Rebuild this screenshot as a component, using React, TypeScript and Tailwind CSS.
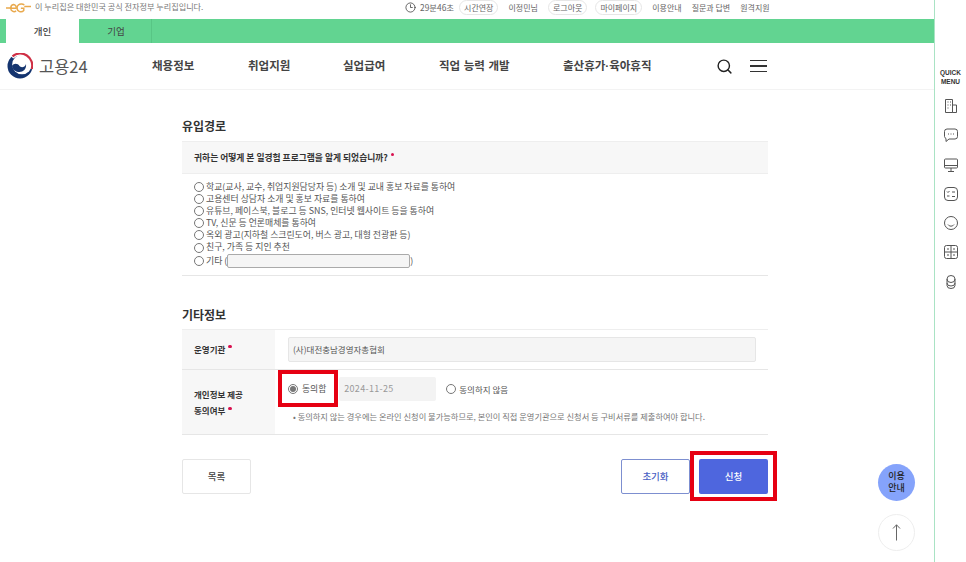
import React from 'react';
import { Clock3, Search } from 'lucide-react';

const KR = 'font-["Noto_Sans_CJK_KR","Noto_Sans",sans-serif]';

const surveyOptions = [
  '학교(교사, 교수, 취업지원담당자 등) 소개 및 교내 홍보 자료를 통하여',
  '고용센터 상담자 소개 및 홍보 자료를 통하여',
  '유튜브, 페이스북, 블로그 등 SNS, 인터넷 웹사이트 등을 통하여',
  'TV, 신문 등 언론매체를 통하여',
  '옥외 광고(지하철 스크린도어, 버스 광고, 대형 전광판 등)',
  '친구, 가족 등 지인 추천',
];

const menus = [
  { label: '채용정보', cls: 'w-[96px]' },
  { label: '취업지원', cls: 'w-[95px]' },
  { label: '실업급여', cls: 'w-[96px]' },
  { label: '직업 능력 개발', cls: 'w-[124px] [word-spacing:1px]' },
];

function Radio({ checked = false }: { checked?: boolean }) {
  return (
    <span className="flex h-[10px] w-[10px] shrink-0 items-center justify-center rounded-full border border-[#777] bg-white">
      {checked && <span className="h-[6px] w-[6px] rounded-full bg-[#777]" />}
    </span>
  );
}

function Pill({ children }: { children: React.ReactNode }) {
  return (
    <span className="flex h-[15px] items-center rounded-full border border-[#e6e6e6] px-[4px]">{children}</span>
  );
}

function Required() {
  return <span className="mb-[6px] ml-[3px] inline-block h-[3.500px] w-[3.500px] rounded-full bg-[#d8114f] align-middle" />;
}

function Logo() {
  return (
    <svg width="26" height="26" viewBox="0 0 26 26">
      <circle cx="13" cy="13" r="12.500" fill="#14346f" />
      <circle cx="15" cy="11.500" r="9.800" fill="#fff" />
      <path d="M5 13C7 9.500 11 10.500 12.500 13C14 15 18 14.500 19 11C19.800 16 16 19 12.500 19C9 19 6 17 5 13Z" fill="#14346f" />
      <path d="M4.800 4A12 12 0 0 1 24.700 16" fill="none" stroke="#fff" strokeWidth="4" />
      <path d="M5.500 3.300A12 12 0 0 1 24.700 16" fill="none" stroke="#cf2f45" strokeWidth="2.200" />
    </svg>
  );
}

function EgLogo() {
  return (
    <svg width="25" height="10" viewBox="0 0 26 10" fill="none" stroke="#e9a94d" strokeWidth="1.500">
      <path d="M0 5h6M19 3.500h7" />
      <path d="M4 5.200h6.500A3 3 0 0 0 7.800 1.400 3.500 3.500 0 0 0 5 5a3.400 3.400 0 0 0 5.500 3" />
      <path d="M19 2a4 4 0 0 0-3-1.200A4.200 4.200 0 0 0 11.500 5a4 4 0 0 0 7 2.600V5.200h-3" />
    </svg>
  );
}

function QuickIcon({ children }: { children: React.ReactNode }) {
  return (
    <svg width="14" height="16" viewBox="0 0 14 16" fill="none" stroke="#555" strokeWidth="1" className="overflow-visible">
      {children}
    </svg>
  );
}

function QuickMenu() {
  return (
    <aside className="flex w-[32px] shrink-0 flex-col items-center border-l-[1.500px] border-[#a9e3c4] bg-white pt-[68px]">
      <div className='text-center font-["Liberation_Sans",sans-serif] text-[6.500px] font-bold leading-[9px] text-[#333]'>
        QUICK
        <br />
        MENU
      </div>
      <div className="mt-[12px] flex flex-col items-center gap-[13.300px]">
        <QuickIcon>
          <path d="M1.500 1.500h7v13h-7zM8.500 7h4v7.500h-4zM3.500 4h1M6 4h1M3.500 7h1M6 7h1M3.500 10h1" />
        </QuickIcon>
        <QuickIcon>
          <path d="M3 2h8a2.500 2.500 0 0 1 2.500 2.500v5A2.500 2.500 0 0 1 11 12H5l-3 2.500V11.500A2.500 2.500 0 0 1 .5 9.500v-5A2.500 2.500 0 0 1 3 2Z" />
          <path d="M4 7h1M6.500 7h1M9 7h1" />
        </QuickIcon>
        <QuickIcon>
          <path d="M1.500 2h11a1 1 0 0 1 1 1v7a1 1 0 0 1-1 1h-11a1 1 0 0 1-1-1V3a1 1 0 0 1 1-1ZM.5 8.500h13M7 11v3M4 14.500h6" />
        </QuickIcon>
        <QuickIcon>
          <path d="M4 1.500h6a3.500 3.500 0 0 1 3.500 3.500v6a3.500 3.500 0 0 1-3.500 3.500H4A3.500 3.500 0 0 1 .5 11V5A3.500 3.500 0 0 1 4 1.500Z" />
          <path d="M3 5.500l1 1 1.500-1.500M8 6h3M3 10h2.500M8 10.500h3" />
        </QuickIcon>
        <QuickIcon>
          <circle cx="7" cy="8" r="6.500" />
          <path d="M4 9.500a3.500 3.500 0 0 0 6 0" />
        </QuickIcon>
        <QuickIcon>
          <rect x=".5" y="1.500" width="13" height="13" rx="2" />
          <path d="M7 1.500v13M.5 8h13M3 5h2M9 5h2M3 11h2M9 11h2" />
        </QuickIcon>
        <QuickIcon>
          <ellipse cx="7" cy="5" rx="4" ry="3.500" />
          <path d="M3 5v6.500a4 3 0 0 0 8 0V5M3 9a4 3 0 0 0 8 0" />
        </QuickIcon>
      </div>
    </aside>
  );
}

export default function App() {
  return (
    <div className={`${KR} relative flex h-[562px] w-[966px] overflow-hidden bg-white text-[#333]`}>
      <div className="flex w-[934px] shrink-0 flex-col">
        {/* util bar */}
        <div className="flex h-[19px] items-center pb-[4px] text-[8px] text-[#666]">
          <div className="ml-[6px]">
            <EgLogo />
          </div>
          <span className="ml-[4px] w-[370px] text-[8.150px] text-[#777]">이 누리집은 대한민국 공식 전자정부 누리집입니다.</span>
          <div className="flex items-center">
            <Clock3 size={11} strokeWidth={1.600} className="text-[#333]" />
            <span className="ml-[4px] text-[8.400px]">29분46초</span>
            <span className="ml-[5px]">
              <Pill>시간연장</Pill>
            </span>
            <span className="ml-[10px]">이정민님</span>
            <span className="ml-[10px]">
              <Pill>로그아웃</Pill>
            </span>
            <span className="ml-[8px]">
              <Pill>마이페이지</Pill>
            </span>
            <span className="ml-[10px]">이용안내</span>
            <span className="ml-[10px]">질문과 답변</span>
            <span className="ml-[10px]">원격지원</span>
          </div>
        </div>

        {/* tabs */}
        <div className="flex h-[24px] bg-[#62d491] pl-[6px] text-[9.500px] leading-[24px] text-[#444]">
          <div className="w-[73px] bg-white text-center font-medium">개인</div>
          <div className="w-[73px] border-r border-[#58c585] pl-[2px] text-center">기업</div>
        </div>

        {/* header */}
        <header className="flex h-[47px] items-center border-b border-[#f3f3f3]">
          <div className="ml-[7px] flex w-[145px] items-center">
            <Logo />
            <span className="ml-[6px] text-[16.500px] leading-none text-[#555]">고용24</span>
          </div>
          {menus.map((m) => (
            <span key={m.label} className={`${m.cls} shrink-0 text-[11.500px] font-semibold text-[#444]`}>
              {m.label}
            </span>
          ))}
          <span className="w-[120px] shrink-0 text-[11.500px] font-semibold text-[#444]">
            출산휴가<span className='font-["Liberation_Sans",sans-serif]'>·</span>육아휴직
          </span>
          <Search size={17} strokeWidth={2} className="ml-[33px] text-[#222]" />
          <div className="ml-[17px] flex w-[17px] flex-col gap-[4px]">
            <span className="h-[1.500px] bg-[#333]" />
            <span className="h-[1.500px] bg-[#333]" />
            <span className="h-[1.500px] bg-[#333]" />
          </div>
        </header>

        {/* form */}
        <main className="ml-[182px] w-[586px]">
          <h2 className="mt-[27px] text-[12px] font-semibold leading-[18px] text-[#333]">유입경로</h2>
          <div className="mt-[6px] flex h-[33px] items-center border-y border-[#eee] bg-[#f7f7f7] pl-[12px] text-[8.770px] font-semibold text-[#333]">
            귀하는 어떻게 본 일경험 프로그램을 알게 되었습니까?
            <Required />
          </div>
          <div className="h-[102px] border-b border-[#e6e6e6] pl-[12px] pt-[7px] text-[8.900px] leading-[12.100px] text-[#555]">
            {surveyOptions.map((o) => (
              <div key={o} className="flex items-center gap-[2px]">
                <Radio />
                <span>{o}</span>
              </div>
            ))}
            <div className="flex items-center">
              <Radio />
              <span className="ml-[2px]">기타 (</span>
              <span className="h-[14px] w-[183px] rounded-[2px] border border-[#aaa] bg-[#f5f5f5]" />
              <span>)</span>
            </div>
          </div>

          <h2 className="mt-[30px] text-[12px] font-semibold leading-[18px] text-[#333]">기타정보</h2>
          <div className="mt-[5px] border-b border-t border-b-[#e6e6e6] border-t-[#eee] text-[8.500px]">
            <div className="flex h-[40px] border-b border-[#e6e6e6]">
              <div className="flex w-[93px] items-center bg-[#f7f7f7] pl-[12px] font-semibold">
                운영기관
                <Required />
              </div>
              <div className="ml-[13px] mt-[7px] flex h-[25px] w-[468px] items-center rounded-[2px] border border-[#e6e6e6] bg-[#f5f5f5] pl-[4px] text-[#555]">
                (사)대전충남경영자총협회
              </div>
            </div>
            <div className="flex h-[64px]">
              <div className="flex w-[93px] flex-col justify-center bg-[#f7f7f7] pl-[12px] font-semibold leading-[16px]">
                <span>개인정보 제공</span>
                <span>
                  동의여부
                  <Required />
                </span>
              </div>
              <div className="ml-[13px] pt-[7px]">
                <div className="flex items-center text-[#555]">
                  <Radio checked />
                  <span className="ml-[4px] text-[8.800px]">동의함</span>
                  <div className="ml-[13px] flex h-[24px] w-[97px] items-center rounded-[2px] bg-[#f3f3f3] pl-[5px] text-[9px] tracking-[0.3px] text-[#999]">
                    2024-11-25
                  </div>
                  <span className="ml-[10px]">
                    <Radio />
                  </span>
                  <span className="ml-[3px]">동의하지 않음</span>
                </div>
                <p className="mt-[9px] pl-[5px] text-[8.240px] text-[#777]">
                  • 동의하지 않는 경우에는 온라인 신청이 불가능하므로, 본인이 직접 운영기관으로 신청서 등 구비서류를 제출하여야 합니다.
                </p>
              </div>
            </div>
          </div>

          <div className="mt-[24px] flex text-[9.500px] font-medium">
            <button className="h-[35px] w-[69px] rounded-[2px] border border-[#e6e6e6] bg-white text-[#444]">목록</button>
            <button className="ml-auto h-[35px] w-[69px] rounded-[2px] border border-[#7d8fd0] bg-white text-[#4a5fc4]">초기화</button>
            <button className="ml-[9px] h-[35px] w-[69px] rounded-[2px] bg-[#4e66de] text-white">신청</button>
          </div>
        </main>
      </div>

      <QuickMenu />

      {/* annotation boxes */}
      <div className="absolute left-[278px] top-[370px] h-[37px] w-[60px] border-[4px] border-[#e60012]" />
      <div className="absolute left-[690px] top-[451px] h-[50px] w-[87px] border-[4px] border-[#e60012]" />

      {/* floating buttons */}
      <div className="absolute left-[878px] top-[464px] flex h-[37px] w-[37px] items-center justify-center rounded-full bg-[#85a3fb] pb-[1px] text-center text-[9px] font-medium leading-[12px] text-[#222]">
        이용
        <br />
        안내
      </div>
      <div className="absolute left-[878px] top-[514px] flex h-[37px] w-[37px] items-center justify-center rounded-full border border-[#eee] bg-white">
        <svg width="9" height="17" viewBox="0 0 9 17" fill="none" stroke="#666" strokeWidth="1">
          <path d="M4.500 16.500V.8M1 4.500 4.500.8 8 4.500" />
        </svg>
      </div>
    </div>
  );
}
